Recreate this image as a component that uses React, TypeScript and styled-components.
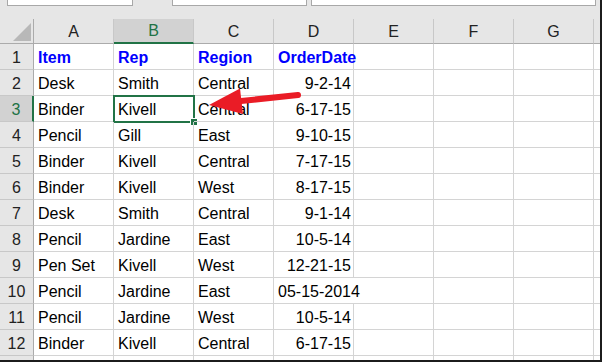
import styled, { createGlobalStyle, css } from "styled-components";

const rows: string[][] = [
  ["Desk", "Smith", "Central", "9-2-14"],
  ["Binder", "Kivell", "Central", "6-17-15"],
  ["Pencil", "Gill", "East", "9-10-15"],
  ["Binder", "Kivell", "Central", "7-17-15"],
  ["Binder", "Kivell", "West", "8-17-15"],
  ["Desk", "Smith", "Central", "9-1-14"],
  ["Pencil", "Jardine", "East", "10-5-14"],
  ["Pen Set", "Kivell", "West", "12-21-15"],
  ["Pencil", "Jardine", "East", "05-15-2014"],
  ["Pencil", "Jardine", "West", "10-5-14"],
  ["Binder", "Kivell", "Central", "6-17-15"],
];

const letters = ["A", "B", "C", "D", "E", "F", "G", ""];
const headers = ["Item", "Rep", "Region", "OrderDate"];

const App = () => {
  return (
    <Frame>
      <GlobalStyle />
      <TopStrip>
        <NameBox $w={126} />
        <NameBox $w={135} $ml={39} />
        <NameBox $w={285} $ml={4} />
      </TopStrip>
      <Sheet>
        <Corner>
          <svg width="34" height="25" viewBox="0 0 34 25">
            <polygon points="31,4 13,22 31,22" fill="#b8b8b8" />
          </svg>
        </Corner>
        {letters.map((l, i) => (
          <ColHead key={"h" + i} $active={l === "B"} $last={i === 7}>
            {l}
          </ColHead>
        ))}

        <RowHead>1</RowHead>
        {headers.map((h) => (
          <Cell key={h} $bold>
            {h}
          </Cell>
        ))}
        {[0, 1, 2, 3].map((i) => (
          <Cell key={"e1" + i} $last={i === 3} />
        ))}

        {rows.map((r, ri) => {
          const n = ri + 2;
          const long = r[3].length > 8;
          return [
            <RowHead key={"r" + n} $active={n === 3}>
              {n}
            </RowHead>,
            <Cell key={n + "a"}>{r[0]}</Cell>,
            <Cell key={n + "b"}>
              {r[1]}
              {n === 3 && (
                <Selection>
                  <FillHandle />
                </Selection>
              )}
            </Cell>,
            <Cell key={n + "c"}>{r[2]}</Cell>,
            <Cell key={n + "d"} $right={!long} $noBorder={long}>
              {r[3]}
            </Cell>,
            <Cell key={n + "e"} />,
            <Cell key={n + "f"} />,
            <Cell key={n + "g"} />,
            <Cell key={n + "h"} $last />,
          ];
        })}

        <RowHead />
        {letters.map((_, i) => (
          <Cell key={"e13" + i} $last={i === 7} />
        ))}
      </Sheet>

      <Arrow width="602" height="362" viewBox="0 0 602 362">
        <line x1="236" y1="101.5" x2="298" y2="95" stroke="#ea1c26" strokeWidth="6" strokeLinecap="round" />
        <polygon points="209,105 240,88.5 243,114" fill="#ea1c26" />
      </Arrow>
    </Frame>
  );
};

export default App;

const GlobalStyle = createGlobalStyle`
  body {
    margin: 0;
    background: #ffffff;
    font-family: "Liberation Sans", Arial, sans-serif;
  }
`;

const Frame = styled.div`
  position: relative;
  width: 602px;
  height: 362px;
  box-sizing: border-box;
  border-right: 2px solid #1c1c1c;
  border-bottom: 2px solid #1c1c1c;
  background: #e6e6e6;
  overflow: hidden;
  font-size: 16px;
  color: #000;
`;

const TopStrip = styled.div`
  height: 19px;
  display: flex;
  align-items: flex-start;
  padding-left: 7px;
`;

const NameBox = styled.div<{ $w: number; $ml?: number }>`
  width: ${(p) => p.$w}px;
  margin-left: ${(p) => p.$ml || 0}px;
  height: 6px;
  box-sizing: border-box;
  background: #ffffff;
  border: 1px solid #a8a8a8;
  border-top: none;
`;

const Sheet = styled.div`
  display: grid;
  grid-template-columns: 34px repeat(7, 80px) 1fr;
  grid-template-rows: 25px repeat(13, 26px);
  background: #ffffff;
`;

const Corner = styled.div`
  background: #e6e6e6;
  border-right: 1px solid #ababab;
  border-bottom: 1px solid #ababab;
  svg {
    display: block;
  }
`;

const ColHead = styled.div<{ $active?: boolean; $last?: boolean }>`
  display: flex;
  align-items: center;
  justify-content: center;
  padding-top: 1px;
  box-sizing: border-box;
  background: #e6e6e6;
  color: #222;
  border-right: ${(p) => (p.$last ? "none" : "1px solid #c8c8c8")};
  border-bottom: 1px solid #ababab;
  ${(p) =>
    p.$active &&
    css`
      background: #d2d2d2;
      color: #217346;
      border-bottom: 2px solid #217346;
    `}
`;

const RowHead = styled.div<{ $active?: boolean }>`
  display: flex;
  align-items: flex-end;
  justify-content: center;
  padding-bottom: 2px;
  box-sizing: border-box;
  background: #e6e6e6;
  color: #222;
  border-right: 1px solid #ababab;
  border-bottom: 1px solid #c8c8c8;
  ${(p) =>
    p.$active &&
    css`
      background: #d2d2d2;
      color: #217346;
      border-right: 2px solid #217346;
    `}
`;

const Cell = styled.div<{ $bold?: boolean; $right?: boolean; $noBorder?: boolean; $last?: boolean }>`
  position: relative;
  display: flex;
  align-items: flex-end;
  justify-content: ${(p) => (p.$right ? "flex-end" : "flex-start")};
  padding: 0 2px 2px 4px;
  box-sizing: border-box;
  white-space: nowrap;
  border-right: ${(p) => (p.$noBorder || p.$last ? "none" : "1px solid #d4d4d4")};
  border-bottom: 1px solid #d4d4d4;
  ${(p) =>
    p.$bold &&
    css`
      font-weight: bold;
      color: #0000ff;
    `}
`;

const Selection = styled.div`
  position: absolute;
  left: -1px;
  top: -1px;
  width: 82px;
  height: 28px;
  box-sizing: border-box;
  border: 2px solid #217346;
`;

const FillHandle = styled.div`
  position: absolute;
  right: -5px;
  bottom: -5px;
  width: 6px;
  height: 6px;
  background: #217346;
  border: 1px solid #ffffff;
`;

const Arrow = styled.svg`
  position: absolute;
  left: 0;
  top: 0;
  pointer-events: none;
`;
